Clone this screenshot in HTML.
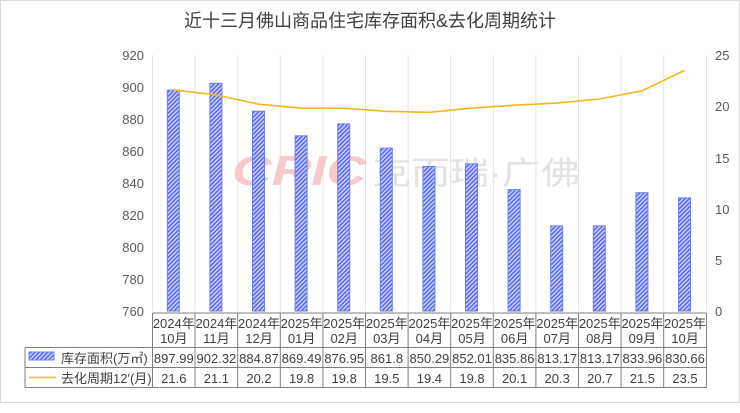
<!DOCTYPE html>
<html><head><meta charset="utf-8"><style>
html,body{margin:0;padding:0;background:#fff;}
svg{display:block;font-family:"Liberation Sans","Noto Sans CJK SC",sans-serif;}
</style></head><body>
<svg width="740" height="413" viewBox="0 0 740 413" xmlns="http://www.w3.org/2000/svg">
<defs>
<pattern id="h" width="3" height="3" patternUnits="userSpaceOnUse" patternTransform="rotate(45)">
<rect width="3" height="3" fill="#dfe3ff"/><rect width="1.8" height="3" fill="#5c6ef0"/>
</pattern>
</defs>
<rect x="0.5" y="0.5" width="739" height="402" fill="#fff" stroke="#d9d9d9"/>
<text x="370" y="27" text-anchor="middle" font-size="18" fill="#404040">近十三月佛山商品住宅库存面积&amp;去化周期统计</text>
<g stroke="#e3e3e3" stroke-width="1">
<line x1="152.5" y1="55" x2="152.5" y2="311"/><line x1="195" y1="55" x2="195" y2="311"/><line x1="237.7" y1="55" x2="237.7" y2="311"/><line x1="280.3" y1="55" x2="280.3" y2="311"/><line x1="322.9" y1="55" x2="322.9" y2="311"/><line x1="365.5" y1="55" x2="365.5" y2="311"/><line x1="408.1" y1="55" x2="408.1" y2="311"/><line x1="450.7" y1="55" x2="450.7" y2="311"/><line x1="493.3" y1="55" x2="493.3" y2="311"/><line x1="535.9" y1="55" x2="535.9" y2="311"/><line x1="578.5" y1="55" x2="578.5" y2="311"/><line x1="621.1" y1="55" x2="621.1" y2="311"/><line x1="663.7" y1="55" x2="663.7" y2="311"/><line x1="706.5" y1="55" x2="706.5" y2="311"/>
</g>
<text x="232" y="185" font-size="42" font-weight="bold" font-style="italic" fill="#f7c9cd" textLength="134" lengthAdjust="spacingAndGlyphs">CRIC</text>
<text x="372" y="184" font-size="32" fill="#e3e3e3" textLength="208" lengthAdjust="spacingAndGlyphs">克而瑞·广佛</text>
<g font-size="13" fill="#595959" text-anchor="end">
<text x="144" y="60">920</text><text x="144" y="92">900</text><text x="144" y="124">880</text><text x="144" y="156">860</text><text x="144" y="188">840</text><text x="144" y="220">820</text><text x="144" y="252">800</text><text x="144" y="284">780</text><text x="144" y="316">760</text>
</g>
<g font-size="13" fill="#595959">
<text x="715" y="60">25</text><text x="715" y="111">20</text><text x="715" y="163">15</text><text x="715" y="214">10</text><text x="715" y="265">5</text><text x="715" y="316">0</text>
</g>
<g fill="url(#h)" stroke="#6b7cf0" stroke-width="1">
<rect x="167.3" y="90.2" width="12" height="220.8"/>
<rect x="209.9" y="83.3" width="12" height="227.7"/>
<rect x="252.5" y="111.2" width="12" height="199.8"/>
<rect x="295.1" y="135.8" width="12" height="175.2"/>
<rect x="337.7" y="123.9" width="12" height="187.1"/>
<rect x="380.3" y="148.1" width="12" height="162.9"/>
<rect x="422.9" y="166.5" width="12" height="144.5"/>
<rect x="465.5" y="163.8" width="12" height="147.2"/>
<rect x="508.1" y="189.6" width="12" height="121.4"/>
<rect x="550.7" y="225.9" width="12" height="85.1"/>
<rect x="593.3" y="225.9" width="12" height="85.1"/>
<rect x="635.9" y="192.7" width="12" height="118.3"/>
<rect x="678.5" y="197.9" width="12" height="113.1"/>
</g>
<polyline fill="none" stroke="#f5b71f" stroke-width="1.6" points="173.3,89.8 215.9,94.9 258.5,104.2 301.1,108.2 343.7,108.2 386.3,111.3 428.9,112.3 471.5,108.2 514.1,105.2 556.7,103.1 599.3,99 641.9,90.8 684.5,70.4"/>
<g stroke="#7f7f7f" stroke-width="1" fill="none">
<line x1="152.5" y1="313" x2="706.5" y2="313"/>
<line x1="25" y1="347.5" x2="706.5" y2="347.5"/>
<line x1="25" y1="367.5" x2="706.5" y2="367.5"/>
<line x1="25" y1="387.5" x2="706.5" y2="387.5"/>
<line x1="25" y1="347.5" x2="25" y2="387.5"/>
<line x1="152.5" y1="313" x2="152.5" y2="387.5"/><line x1="195" y1="313" x2="195" y2="387.5"/><line x1="237.7" y1="313" x2="237.7" y2="387.5"/><line x1="280.3" y1="313" x2="280.3" y2="387.5"/><line x1="322.9" y1="313" x2="322.9" y2="387.5"/><line x1="365.5" y1="313" x2="365.5" y2="387.5"/><line x1="408.1" y1="313" x2="408.1" y2="387.5"/><line x1="450.7" y1="313" x2="450.7" y2="387.5"/><line x1="493.3" y1="313" x2="493.3" y2="387.5"/><line x1="535.9" y1="313" x2="535.9" y2="387.5"/><line x1="578.5" y1="313" x2="578.5" y2="387.5"/><line x1="621.1" y1="313" x2="621.1" y2="387.5"/><line x1="663.7" y1="313" x2="663.7" y2="387.5"/><line x1="706.5" y1="313" x2="706.5" y2="387.5"/>
</g>
<rect x="29" y="352" width="25" height="8" fill="url(#h)" stroke="#6b7cf0" stroke-width="1"/>
<line x1="29" y1="377.5" x2="56" y2="377.5" stroke="#f5b71f" stroke-width="1.5"/>
<g font-size="13" fill="#404040">
<text x="61" y="363">库存面积(万㎡)</text>
<text x="61" y="383">去化周期12'(月)</text>
</g>
<g font-size="13" fill="#404040" text-anchor="middle">
<text x="173.8" y="328">2024年</text><text x="173.8" y="343">10月</text>
<text x="216.4" y="328">2024年</text><text x="216.4" y="343">11月</text>
<text x="259" y="328">2024年</text><text x="259" y="343">12月</text>
<text x="301.6" y="328">2025年</text><text x="301.6" y="343">01月</text>
<text x="344.2" y="328">2025年</text><text x="344.2" y="343">02月</text>
<text x="386.8" y="328">2025年</text><text x="386.8" y="343">03月</text>
<text x="429.4" y="328">2025年</text><text x="429.4" y="343">04月</text>
<text x="472" y="328">2025年</text><text x="472" y="343">05月</text>
<text x="514.6" y="328">2025年</text><text x="514.6" y="343">06月</text>
<text x="557.2" y="328">2025年</text><text x="557.2" y="343">07月</text>
<text x="599.8" y="328">2025年</text><text x="599.8" y="343">08月</text>
<text x="642.4" y="328">2025年</text><text x="642.4" y="343">09月</text>
<text x="685" y="328">2025年</text><text x="685" y="343">10月</text>
<text x="173.8" y="363">897.99</text><text x="216.4" y="363">902.32</text><text x="259" y="363">884.87</text><text x="301.6" y="363">869.49</text><text x="344.2" y="363">876.95</text><text x="386.8" y="363">861.8</text><text x="429.4" y="363">850.29</text><text x="472" y="363">852.01</text><text x="514.6" y="363">835.86</text><text x="557.2" y="363">813.17</text><text x="599.8" y="363">813.17</text><text x="642.4" y="363">833.96</text><text x="685" y="363">830.66</text>
<text x="173.8" y="383">21.6</text><text x="216.4" y="383">21.1</text><text x="259" y="383">20.2</text><text x="301.6" y="383">19.8</text><text x="344.2" y="383">19.8</text><text x="386.8" y="383">19.5</text><text x="429.4" y="383">19.4</text><text x="472" y="383">19.8</text><text x="514.6" y="383">20.1</text><text x="557.2" y="383">20.3</text><text x="599.8" y="383">20.7</text><text x="642.4" y="383">21.5</text><text x="685" y="383">23.5</text>
</g>
</svg>
</body></html>
